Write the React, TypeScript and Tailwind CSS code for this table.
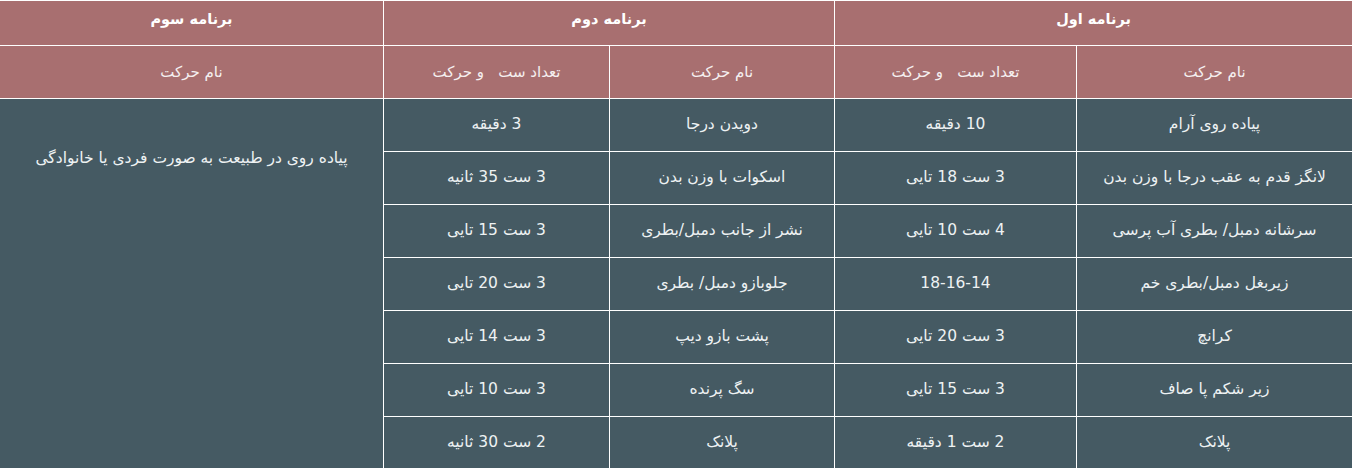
import React from 'react';

const rows = [
  ['پیاده روی آرام', '10 دقیقه', 'دویدن درجا', '3 دقیقه'],
  ['لانگز قدم به عقب درجا با وزن بدن', '3 ست 18 تایی', 'اسکوات با وزن بدن', '3 ست 35 ثانیه'],
  ['سرشانه دمبل/ بطری آب پرسی', '4 ست 10 تایی', 'نشر از جانب دمبل/بطری', '3 ست 15 تایی'],
  ['زیربغل دمبل/بطری خم', '18-16-14', 'جلوبازو دمبل/ بطری', '3 ست 20 تایی'],
  ['کرانچ', '3 ست 20 تایی', 'پشت بازو دیپ', '3 ست 14 تایی'],
  ['زیر شکم پا صاف', '3 ست 15 تایی', 'سگ پرنده', '3 ست 10 تایی'],
  ['پلانک', '2 ست 1 دقیقه', 'پلانک', '2 ست 30 ثانیه'],
];

const th = 'border border-white font-bold text-white text-center text-[14.5px] pb-[6px]';
const sub = 'border border-white font-normal text-[#f5f0f0] text-center text-[15px]';
const td = 'border border-white text-[#eef2f3] text-center text-[15.5px]';

export default function App() {
  return (
    <div className="w-[1353px] bg-white font-['DejaVu_Sans',sans-serif]" dir="rtl">
      <table className="w-full table-fixed border-collapse">
        <colgroup>
          <col className="w-[276px]" />
          <col className="w-[242px]" />
          <col className="w-[225px]" />
          <col className="w-[226px]" />
          <col className="w-[384px]" />
        </colgroup>
        <thead className="bg-[#a86f70]">
          <tr className="h-[45px]">
            <th colSpan={2} className={th}>برنامه اول</th>
            <th colSpan={2} className={th}>برنامه دوم</th>
            <th className={th}>برنامه سوم</th>
          </tr>
          <tr className="h-[53px]">
            <th className={sub}>نام حرکت</th>
            <th className={sub}>تعداد ست &nbsp;&nbsp;و حرکت</th>
            <th className={sub}>نام حرکت</th>
            <th className={sub}>تعداد ست &nbsp;&nbsp;و حرکت</th>
            <th className={sub}>نام حرکت</th>
          </tr>
        </thead>
        <tbody className="bg-[#455a63]">
          {rows.map((r, i) => (
            <tr key={i} className="h-[53px]">
              <td className={td}>{r[0]}</td>
              <td className={td}>{r[1]}</td>
              <td className={td}>{r[2]}</td>
              <td className={td}>{r[3]}</td>
              {i === 0 && (
                <td rowSpan={7} className={`${td} align-top pt-[48px]`}>
                  پیاده روی در طبیعت به صورت فردی یا خانوادگی
                </td>
              )}
            </tr>
          ))}
        </tbody>
      </table>
    </div>
  );
}
